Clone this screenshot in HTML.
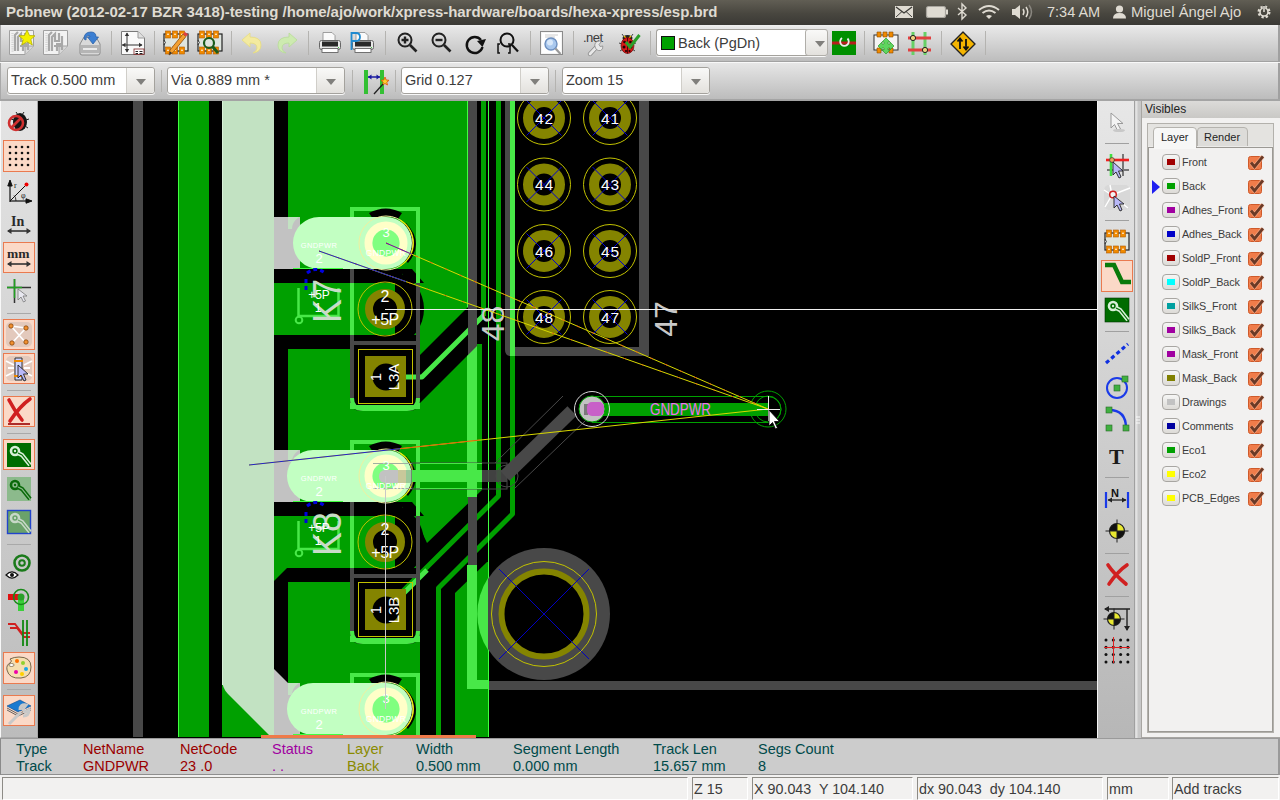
<!DOCTYPE html><html><head><meta charset="utf-8"><style>
*{margin:0;padding:0;box-sizing:border-box}
html,body{width:1280px;height:800px;overflow:hidden;background:#f2f1f0;font-family:"Liberation Sans",sans-serif}
.a{position:absolute}
svg{position:absolute;overflow:visible}
#title{left:0;top:0;width:1280px;height:25px;background:linear-gradient(#615e54,#48463f 55%,#3a3935);color:#dfdbd2;font-size:14.5px;line-height:24px;white-space:nowrap}
#tb1{left:0;top:25px;width:1280px;height:37px;background:linear-gradient(#f0f0f0,#e6e6e6 8%,#bdbdbd);border-left:1px solid #a9a9a9;border-right:2px solid #a0a0a0;border-bottom:1px solid #a2a2a2}
#tb1w{left:0;top:62px;width:1278px;height:1px;background:#f8f8f8}
#tb2{left:0;top:63px;width:1280px;height:36px;background:linear-gradient(#e6e6e6,#bcbcbc);border-left:1px solid #a9a9a9;border-right:2px solid #a0a0a0}
#tb2b{left:0;top:99px;width:1280px;height:2px;background:#a4a4a4}
.sep{position:absolute;width:1px;background:#b4b3b0}
.combo{position:absolute;height:27px;background:#fff;border:1px solid #a4a29d;border-radius:3px;font-size:14.5px;color:#3c3c3c;line-height:25px;padding-left:3px;white-space:nowrap;box-shadow:0 1px 0 #f8f8f8}
.combo .btn{position:absolute;right:0;top:0;bottom:0;width:28px;border-left:1px solid #d0cec9;background:linear-gradient(#f9f9f8,#e3e1dd);border-radius:0 3px 3px 0}
.combo .btn:after{content:"";position:absolute;left:9px;top:11px;border-left:5px solid transparent;border-right:5px solid transparent;border-top:6px solid #807f7c}
#ltb{left:0;top:101px;width:38px;height:637px;background:linear-gradient(#e4e4e4,#bcbcbc);border-left:1px solid #f8f8f8;border-right:1px solid #a8a8a8;border-bottom:1px solid #a8a8a8}
#canvas{left:38px;top:101px;width:1059px;height:637px;background:#000;overflow:hidden}
#rtb{left:1097px;top:101px;width:38px;height:637px;background:linear-gradient(#e7e7e7,#b7b7b7);border-left:1px solid #f4f4f4;border-right:1px solid #a0a0a0}
#sash{left:1135px;top:101px;width:7px;height:637px;background:linear-gradient(90deg,#d6d6d6,#e4e4e4 25%,#c8c8c8 45%,#c8c8c8)}
#panel{left:1141px;top:101px;width:139px;height:637px;background:#f2f1f0;border-left:1px solid #a8a6a2;border-bottom:1px solid #a8a6a2}
#vhead{left:1142px;top:101px;width:138px;height:17px;background:linear-gradient(#dcdbd9,#c9c8c5);color:#1f1f1f;font-size:12px;line-height:17px;padding-left:3px}
#msg{left:0;top:738px;width:1280px;height:37px;background:#cccccc;border-top:1px solid #9a9a9a;border-left:1px solid #8a8a8a;border-right:2px solid #9a9a9a;border-bottom:1px solid #8f8f8f}
#status{left:0;top:775px;width:1280px;height:25px;background:#f2f1f0}
.fld{position:absolute;top:2px;height:23px;border-left:1px solid #8d8b86;border-top:1px solid #8d8b86;border-right:1px solid #fff;border-bottom:1px solid #fff;font-size:14.3px;color:#3c3c3c;line-height:23px;padding-left:1px;white-space:nowrap}
.mh{position:absolute;font-size:14.5px;line-height:17px;white-space:nowrap}
.btnp{position:absolute;background:#fbd9c7;border:1px solid #ea7a4f}
.lsep{position:absolute;height:1px;background:#a9a9a9}
.lname{position:absolute;left:1182px;font-size:10.8px;color:#3c3c3c;line-height:16px;white-space:nowrap;letter-spacing:-0.1px}
.cbtn{position:absolute;left:1162px;width:18px;height:16px;border:1px solid #a8a6a2;border-radius:4px;background:linear-gradient(#f6f6f5,#dddbd7)}
.cbtn i{position:absolute;left:4px;top:4px;width:8px;height:6px}
.chk{position:absolute;left:1248px;width:14px;height:14px;background:#f07746;border:1px solid #c95a2c;border-radius:2px}
</style></head><body>
<div id="title" class="a">
<span style="position:absolute;left:6px;top:0;font-weight:bold;font-size:15px;letter-spacing:-0.05px">Pcbnew (2012-02-17 BZR 3418)-testing /home/ajo/work/xpress-hardware/boards/hexa-xpress/esp.brd</span>
<span style="position:absolute;left:1047px;top:0;font-size:14.5px">7:34 AM</span>
<span style="position:absolute;left:1131px;top:0;font-size:14.8px">Miguel Ángel Ajo</span>
<svg style="left:0;top:0" width="1280" height="24">
<rect x="895.5" y="6.5" width="17" height="11" fill="#dfdbd2" stroke="#dfdbd2"/>
<path d="M896 7 L904 13 L912 7" fill="none" stroke="#3c3b37" stroke-width="1.3"/>
<path d="M896 17 L902 11.5 M912 17 L906 11.5" stroke="#3c3b37" stroke-width="1"/>
<rect x="926.5" y="6.5" width="19" height="11" rx="2" fill="#dfdbd2" stroke="#a8a59e" stroke-width="1.2"/>
<rect x="946" y="9.5" width="2" height="5" fill="#dfdbd2"/>
<path d="M958 8 L966 15 L962 19 L962 4 L966 8 L958 15" fill="none" stroke="#dfdbd2" stroke-width="1.4"/>
<path d="M979 10 Q989 2 999 10" fill="none" stroke="#dfdbd2" stroke-width="2"/>
<path d="M982.5 13 Q989 8 995.5 13" fill="none" stroke="#dfdbd2" stroke-width="2"/>
<path d="M986 16 Q989 14 992 16 L989 19 Z" fill="#dfdbd2"/>
<path d="M1012 9 L1015 9 L1020 5 L1020 19 L1015 15 L1012 15 Z" fill="#dfdbd2"/>
<path d="M1023 9 Q1025 12 1023 15 M1026 7 Q1029.5 12 1026 17" fill="none" stroke="#dfdbd2" stroke-width="1.5"/>
<path d="M1029 5 Q1034 12 1029 19" fill="none" stroke="#8a8780" stroke-width="1.5"/>
<circle cx="1119.5" cy="9" r="3.6" fill="#dfdbd2"/>
<path d="M1113 18.5 Q1113 13 1119.5 13 Q1126 13 1126 18.5 Z" fill="#dfdbd2"/>
<g transform="translate(1264,12)" fill="none" stroke="#dfdbd2">
<circle r="5.2" stroke-width="2.6" stroke-dasharray="2.2 1.9"/>
<circle r="4" stroke-width="1.6"/>
<path d="M0 -7 L0 0" stroke-width="2.4" stroke="#3c3b37"/>
<path d="M0 -6 L0 0" stroke-width="1.6"/>
</g>
</svg>
</div>
<div id="tb1" class="a"></div><div id="tb1w" class="a"></div>
<div class="sep" style="left:111px;top:31px;height:24px"></div>
<div class="sep" style="left:154px;top:31px;height:24px"></div>
<div class="sep" style="left:231px;top:31px;height:24px"></div>
<div class="sep" style="left:308px;top:31px;height:24px"></div>
<div class="sep" style="left:385px;top:31px;height:24px"></div>
<div class="sep" style="left:530px;top:31px;height:24px"></div>
<div class="sep" style="left:573px;top:31px;height:24px"></div>
<div class="sep" style="left:650px;top:31px;height:24px"></div>
<div class="sep" style="left:864px;top:31px;height:24px"></div>
<div class="sep" style="left:941px;top:31px;height:24px"></div>
<div class="sep" style="left:985px;top:31px;height:24px"></div>
<div class="combo" style="left:656px;top:29px;width:171px;border-right:none"><i style="position:absolute;left:4px;top:6px;width:14px;height:14px;background:#00a000;border:1px solid #111"></i><span style="position:absolute;left:21px;top:1px">Back (PgDn)</span><div class="btn" style="right:-1px;width:23px;border:1px solid #b0aea9;border-radius:3px;top:-1px;bottom:-1px"></div></div>
<svg style="left:0;top:0" width="1280" height="62"><g transform="translate(9,30)"><path d="M0.5 0.5 H24.5 V16 L16 24.5 H0.5 Z" fill="#f2f2f2" stroke="#a0a0a0"/><path d="M16 24.5 L16 17 Q16 16 17 16 L24.5 16" fill="#d8d8d8" stroke="#a0a0a0"/><path d="M3 3 V22 M4 3 V22" stroke="#c8c8c8" stroke-dasharray="1 1.2"/><path d="M6 21 V5 L9 2 M9 21 V7 L12 4 V11 H16 V3 M13 14 H20 M11 16 H19 M14 21 V17 M19 20 V6" fill="none" stroke="#a8a8a8" stroke-width="2.2"/><path d="M18 0 L20.5 5.5 L26 5.8 L21.8 9.5 L23.3 15 L18 11.8 L12.7 15 L14.2 9.5 L10 5.8 L15.5 5.5 Z" fill="#f4f000" stroke="#b4b000" stroke-width="0.8"/></g><g transform="translate(43,30)"><path d="M0.5 0.5 H24.5 V16 L16 24.5 H0.5 Z" fill="#f2f2f2" stroke="#a0a0a0"/><path d="M16 24.5 L16 17 Q16 16 17 16 L24.5 16" fill="#d8d8d8" stroke="#a0a0a0"/><path d="M3 3 V22 M4 3 V22" stroke="#c8c8c8" stroke-dasharray="1 1.2"/><path d="M6 21 V5 L9 2 M9 21 V7 L12 4 V11 H16 V3 M13 14 H20 M11 16 H19 M14 21 V17 M19 20 V6" fill="none" stroke="#a8a8a8" stroke-width="2.2"/></g><g transform="translate(78,31)">
<path d="M2 13 L6 6 H18 L22 13 V22 Q22 24 20 24 H4 Q2 24 2 22 Z" fill="#d9d9d9" stroke="#8a8a8a"/>
<path d="M3 14 H21 V22 H3 Z" fill="#b5b5b5"/>
<path d="M5 18 H19" stroke="#eaeaea" stroke-width="2"/>
<path d="M6 8 Q6 1 13 1 Q18 1 18 6 L20.5 6 L15 13 L9.5 6 L12 6 Q12 4 10 4.5 Q7.5 5 8 9 Z" fill="#3b7fd3" stroke="#2c62a8" stroke-width="0.8"/>
</g><g transform="translate(121,31)">
<path d="M0.5 0.5 H17 L23.5 7 V23.5 H0.5 Z" fill="#fafafa" stroke="#7a7a7a"/>
<path d="M17 0.5 V7 H23.5" fill="#e0e0e0" stroke="#9a9a9a"/>
<path d="M6 2 V21 M1 14 H21" stroke="#333" stroke-width="1"/>
<path d="M6 1.5 L3.8 5 H8.2 Z M6 21.5 L3.8 18 H8.2 Z M1 14 L4.5 11.8 V16.2 Z M21.5 14 L18 11.8 V16.2 Z" fill="#333"/>
<rect x="13" y="18" width="10" height="5.5" fill="#fff" stroke="#7a2020" stroke-width="0.8"/>
<path d="M14.5 20.5 H17 M18.5 20.5 H21.5 M14.5 22.5 H17 M18.5 22.5 H21.5" stroke="#222" stroke-width="1.2"/>
</g><g transform="translate(163,30)"><rect x="1" y="4" width="24" height="17" fill="#dfe5df" stroke="#222" stroke-width="1.2"/><path d="M1 10 Q3.5 12.5 1 15" fill="#fff" stroke="#222"/><rect x="2.5" y="1" width="5" height="7" fill="#f08a00" stroke="#b35a00" stroke-width="0.6"/><rect x="4.3" y="3.6" width="1.4" height="1.4" fill="#fff"/><rect x="2.5" y="17" width="5" height="7" fill="#f08a00" stroke="#b35a00" stroke-width="0.6"/><rect x="4.3" y="19.6" width="1.4" height="1.4" fill="#fff"/><rect x="9.5" y="1" width="5" height="7" fill="#f08a00" stroke="#b35a00" stroke-width="0.6"/><rect x="11.3" y="3.6" width="1.4" height="1.4" fill="#fff"/><rect x="9.5" y="17" width="5" height="7" fill="#f08a00" stroke="#b35a00" stroke-width="0.6"/><rect x="11.3" y="19.6" width="1.4" height="1.4" fill="#fff"/><rect x="16.5" y="1" width="5" height="7" fill="#f08a00" stroke="#b35a00" stroke-width="0.6"/><rect x="18.3" y="3.6" width="1.4" height="1.4" fill="#fff"/><rect x="16.5" y="17" width="5" height="7" fill="#f08a00" stroke="#b35a00" stroke-width="0.6"/><rect x="18.3" y="19.6" width="1.4" height="1.4" fill="#fff"/><path d="M6 25 L7 20 L20 4 L23 6.5 L10 22.5 Z" fill="#f4a030" stroke="#8a5010" stroke-width="0.8"/><path d="M20 4 L22 2 L25 4.5 L23 6.5 Z" fill="#e04040"/><path d="M6 25 L7 21.5 L9 23 Z" fill="#333"/></g><g transform="translate(197,30)"><rect x="1" y="4" width="24" height="17" fill="#dfe5df" stroke="#222" stroke-width="1.2"/><path d="M1 10 Q3.5 12.5 1 15" fill="#fff" stroke="#222"/><rect x="2.5" y="1" width="5" height="7" fill="#f08a00" stroke="#b35a00" stroke-width="0.6"/><rect x="4.3" y="3.6" width="1.4" height="1.4" fill="#fff"/><rect x="2.5" y="17" width="5" height="7" fill="#f08a00" stroke="#b35a00" stroke-width="0.6"/><rect x="4.3" y="19.6" width="1.4" height="1.4" fill="#fff"/><rect x="9.5" y="1" width="5" height="7" fill="#f08a00" stroke="#b35a00" stroke-width="0.6"/><rect x="11.3" y="3.6" width="1.4" height="1.4" fill="#fff"/><rect x="9.5" y="17" width="5" height="7" fill="#f08a00" stroke="#b35a00" stroke-width="0.6"/><rect x="11.3" y="19.6" width="1.4" height="1.4" fill="#fff"/><rect x="16.5" y="1" width="5" height="7" fill="#f08a00" stroke="#b35a00" stroke-width="0.6"/><rect x="18.3" y="3.6" width="1.4" height="1.4" fill="#fff"/><rect x="16.5" y="17" width="5" height="7" fill="#f08a00" stroke="#b35a00" stroke-width="0.6"/><rect x="18.3" y="19.6" width="1.4" height="1.4" fill="#fff"/><circle cx="12" cy="13" r="5" fill="none" stroke="#1c5c1c" stroke-width="2.2"/><path d="M15.5 16.5 L21 23" stroke="#1c5c1c" stroke-width="3"/></g><g transform="translate(242,33)">
<path d="M8 0 L0 7 L8 14 V10 Q15 10 15 15 Q15 18 11 20 Q19 19 19 12 Q19 4 8 4 Z" fill="#f3eaa0" stroke="#e6dc80" stroke-width="0.8"/>
</g><g transform="translate(278,33)">
<path d="M11 0 L19 7 L11 14 V10 Q4 10 4 15 Q4 18 8 20 Q0 19 0 12 Q0 4 11 4 Z" fill="#cdeab0" stroke="#b8dc98" stroke-width="0.8"/>
</g><g transform="translate(319,32)"><path d="M4 0.5 H13 L16 3.5 V9 H4 Z" fill="#fafafa" stroke="#8a8a8a" stroke-width="0.8"/><rect x="0.5" y="8.5" width="21" height="9" rx="2" fill="#e8e8e8" stroke="#666"/><rect x="3" y="9.5" width="16" height="5" fill="#2a2a2a"/><rect x="3" y="16.5" width="16" height="4" fill="#fff" stroke="#555" stroke-width="0.8"/><rect x="19" y="15" width="1" height="1" fill="#4c4"/></g><g transform="translate(352,32)"><path d="M4 0.5 H13 L16 3.5 V9 H4 Z" fill="#fafafa" stroke="#8a8a8a" stroke-width="0.8"/><rect x="0.5" y="8.5" width="21" height="9" rx="2" fill="#e8e8e8" stroke="#666"/><rect x="3" y="9.5" width="16" height="5" fill="#2a2a2a"/><rect x="3" y="16.5" width="16" height="4" fill="#fff" stroke="#555" stroke-width="0.8"/><rect x="19" y="15" width="1" height="1" fill="#4c4"/></g><path d="M351.5 50 V33 H356 Q360 33 360 37 Q360 41 356 41 H352" fill="none" stroke="#1e8ad0" stroke-width="1.8"/><g transform="translate(397,32)" fill="none" stroke="#222"><circle cx="8" cy="8" r="6.5" stroke-width="2"/><path d="M13 13 L19.5 19.5" stroke-width="2.6"/><path d="M4.5 8 H11.5 M8 4.5 V11.5" stroke-width="2.4"/></g><g transform="translate(431,32)" fill="none" stroke="#222"><circle cx="8" cy="8" r="6.5" stroke-width="2"/><path d="M13 13 L19.5 19.5" stroke-width="2.6"/><path d="M4.5 8 H11.5" stroke-width="2.4"/></g><g transform="translate(466,35)" fill="none" stroke="#111">
<path d="M15 5 A8 8 0 1 0 16.5 12" stroke-width="2.4"/>
</g><path d="M477 41 L486 39 L482.5 47 Z" fill="#111"/><g transform="translate(497,32)" fill="none" stroke="#111">
<circle cx="10" cy="8" r="6.5" stroke-width="2"/><path d="M15 13 L21 19.5" stroke-width="2.2"/>
<path d="M3 12 H1 V21 H3 M11 12 H13 V21 H11" stroke-width="1.5"/>
</g><g transform="translate(540,31)">
<rect x="0.5" y="0.5" width="22" height="23" fill="#f4f4f4" stroke="#8a8a8a"/>
<rect x="2" y="2" width="19" height="20" fill="#fff"/>
<path d="M5 4 H18 M5 6 H15" stroke="#ccc"/>
<circle cx="11" cy="13" r="6" fill="#a9c8ee" stroke="#6d8fbf" stroke-width="1.4"/>
<circle cx="10" cy="11.5" r="3" fill="#d8e8fa"/>
<path d="M15.5 17.5 L20.5 23" stroke="#999" stroke-width="2.2"/>
</g><g transform="translate(583,31)">
<text x="0" y="11" font-size="13" fill="#3a3a3a" font-family="Liberation Sans" letter-spacing="-0.5">.net</text>
<path d="M7 23 L14 15.5" stroke="#8a8a8a" stroke-width="4.4" stroke-linecap="round"/>
<path d="M7 23 L14 15.5" stroke="#e8e8e8" stroke-width="2.8" stroke-linecap="round"/>
<path d="M12.5 17 Q10.5 12.5 14 10.5 Q16.5 9.5 18.5 10.5 L16 13.5 L17.2 15.5 L19.8 15 Q20.5 18.5 17.5 19.5 Q15 20 13.5 18.5 Z" fill="#e8e8e8" stroke="#8a8a8a" stroke-width="0.8"/>
</g><g transform="translate(617,31)">
<path d="M5 3 L8 7 M16 3 L13 7 M2 12 L5 13 M19 12 L16 13 M3 20 L6 18 M18 20 L15 18" stroke="#333" stroke-width="0.9"/>
<ellipse cx="10.5" cy="7" rx="5" ry="3" fill="#222"/>
<path d="M7 5 L9 7 M14 5 L12 7" stroke="#f0c000" stroke-width="1.2"/>
<ellipse cx="10.5" cy="14.5" rx="6.5" ry="8" fill="#d81818" stroke="#500" stroke-width="0.6"/>
<path d="M10.5 7 V22.5" stroke="#300" stroke-width="0.8"/>
<circle cx="7.5" cy="11" r="1.3" fill="#200"/><circle cx="13.5" cy="11" r="1.3" fill="#200"/><circle cx="7" cy="16" r="1.5" fill="#200"/><circle cx="14" cy="16" r="1.5" fill="#200"/><circle cx="9" cy="20" r="1.1" fill="#200"/><circle cx="12.5" cy="20" r="1.1" fill="#200"/>
<path d="M9 11 L13 16 L22.5 4" fill="none" stroke="#2aa02a" stroke-width="3"/>
</g><g transform="translate(832,31)">
<rect x="0" y="0" width="24" height="24" fill="#009000"/>
<path d="M0 12 H24" stroke="#b81d1d" stroke-width="3"/>
<path d="M15.5 7.5 A4.3 4.3 0 1 1 10 7" fill="none" stroke="#eee" stroke-width="1.8"/>
</g><g transform="translate(873,31)">
<rect x="1" y="4" width="24" height="15" fill="#f4f4f4" stroke="#333" stroke-width="1"/>
<path d="M4 1 H8 V6 H4 Z M10 1 H14 V6 H10 Z M16 1 H20 V6 H16 Z M4 17 H8 V22 H4 Z M16 17 H20 V22 H16 Z" fill="#f08a00" stroke="#8a4a00" stroke-width="0.6"/>
<path d="M13 7 L17 11 H15 V13 H17 V11 L21 15 L17 19 V17 H15 V19 H17 L13 23 L9 19 H11 V17 H9 V19 L5 15 L9 11 V13 H11 V11 H9 Z" fill="#5fd45f" stroke="#2f9a2f" stroke-width="0.7"/>
</g><g transform="translate(907,31)">
<path d="M6 1 V24 M18 1 V24" stroke="#66d066" stroke-width="3"/>
<path d="M1 7 H24 M1 19 H24" stroke="#e04040" stroke-width="3"/>
<circle cx="6" cy="7" r="2.6" fill="#f0d080" stroke="#222"/>
<circle cx="18" cy="19" r="2.6" fill="#f0d080" stroke="#222"/>
</g><g transform="translate(950,31)">
<path d="M13 1 L25 13 L13 25 L1 13 Z" fill="#f4b400" stroke="#222" stroke-width="1.4" stroke-linejoin="round"/>
<path d="M10 18 V8 M7.5 10.5 L10 7.5 L12.5 10.5 M16 8 V18 M13.5 15.5 L16 18.5 L18.5 15.5" fill="none" stroke="#111" stroke-width="1.8"/>
</g></svg>
<div id="tb2" class="a"></div><div id="tb2b" class="a"></div>
<div class="combo" style="left:7px;top:67px;width:148px">Track 0.500 mm<div class="btn"></div></div>
<div class="sep" style="left:161px;top:70px;height:22px"></div>
<div class="combo" style="left:167px;top:67px;width:178px">Via 0.889 mm *<div class="btn"></div></div>
<div class="sep" style="left:352px;top:70px;height:22px"></div>
<div class="sep" style="left:395px;top:70px;height:22px"></div>
<div class="combo" style="left:401px;top:67px;width:148px">Grid 0.127<div class="btn"></div></div>
<div class="sep" style="left:555px;top:70px;height:22px"></div>
<div class="combo" style="left:562px;top:67px;width:148px">Zoom 15<div class="btn"></div></div>
<svg style="left:362px;top:68px" width="28" height="28">
<path d="M4 2 V26 M20 2 V26" stroke="#33c033" stroke-width="4"/>
<path d="M6 9 H18" stroke="#1a1aa0" stroke-width="1.5"/>
<path d="M6 9 L9.5 6.5 V11.5 Z M18 9 L14.5 6.5 V11.5 Z" fill="#1a1aa0"/>
<path d="M23 9 L24.2 12 L27 12.3 L24.8 14.2 L25.5 17 L23 15.5 L20.5 17 L21.2 14.2 L19 12.3 L21.8 12 Z" fill="#f8d030" stroke="#e05000" stroke-width="0.8"/>
<path d="M12 26 L21 16" stroke="#222" stroke-width="1.3"/>
</svg>
<div id="ltb" class="a"></div>
<svg style="left:0;top:0" width="40" height="740"><rect x="3.5" y="140.5" width="31" height="31" fill="#fbd9c7" stroke="#ea7a4f"/><rect x="3.5" y="242.5" width="31" height="30" fill="#fbd9c7" stroke="#ea7a4f"/><rect x="3.5" y="319.5" width="31" height="30" fill="#fbd9c7" stroke="#ea7a4f"/><rect x="3.5" y="353.5" width="31" height="30" fill="#fbd9c7" stroke="#ea7a4f"/><rect x="3.5" y="396.5" width="31" height="30" fill="#fbd9c7" stroke="#ea7a4f"/><rect x="3.5" y="439.5" width="31" height="30" fill="#fbd9c7" stroke="#ea7a4f"/><rect x="3.5" y="652.5" width="31" height="31" fill="#fbd9c7" stroke="#ea7a4f"/><rect x="3.5" y="695.5" width="31" height="30" fill="#fbd9c7" stroke="#ea7a4f"/><rect x="7" y="313" width="24" height="1" fill="#a9a9a9"/><rect x="7" y="390" width="24" height="1" fill="#a9a9a9"/><rect x="7" y="433" width="24" height="1" fill="#a9a9a9"/><rect x="7" y="544" width="24" height="1" fill="#a9a9a9"/><rect x="7" y="689" width="24" height="1" fill="#a9a9a9"/><g transform="translate(7,109)">
<ellipse cx="13" cy="13" rx="7" ry="9" fill="#151515"/>
<path d="M9 3 L11 6 M17 3 L15 6 M4 10 L7 11 M22 10 L19 11 M5 19 L8 17 M21 19 L18 17" stroke="#222" stroke-width="1"/>
<circle cx="9" cy="14" r="7" fill="none" stroke="#d03030" stroke-width="2.6"/>
<path d="M4.5 18.5 L13.5 9.5" stroke="#d03030" stroke-width="2.6"/>
</g><g fill="#111"><circle cx="10" cy="147" r="1.3"/><circle cx="10" cy="153" r="1.3"/><circle cx="10" cy="159" r="1.3"/><circle cx="10" cy="165" r="1.3"/><circle cx="16" cy="147" r="1.3"/><circle cx="16" cy="153" r="1.3"/><circle cx="16" cy="159" r="1.3"/><circle cx="16" cy="165" r="1.3"/><circle cx="22" cy="147" r="1.3"/><circle cx="22" cy="153" r="1.3"/><circle cx="22" cy="159" r="1.3"/><circle cx="22" cy="165" r="1.3"/><circle cx="28" cy="147" r="1.3"/><circle cx="28" cy="153" r="1.3"/><circle cx="28" cy="159" r="1.3"/><circle cx="28" cy="165" r="1.3"/></g><g transform="translate(7,179)" fill="none" stroke="#111">
<path d="M3 23 V3" stroke-width="1.2"/><path d="M0.8 7 L3 1 L5.2 7 Z" fill="#111"/>
<path d="M3 22 H23" stroke-width="1.2"/><path d="M19 19.8 L25 22 L19 24.2 Z" fill="#111"/>
<path d="M3 22 L19 6" stroke-width="1"/><circle cx="19.5" cy="5.5" r="2" fill="#e00" stroke="none"/>
<text x="7" y="9" font-size="8" fill="#111" stroke="none" font-family="Liberation Serif">r</text>
<text x="14" y="19" font-size="8" fill="#111" stroke="none" font-family="Liberation Serif">φ</text>
<path d="M9 22 Q9 18 7 16.5" stroke-width="0.8"/>
</g><text x="11" y="226" font-size="14" font-weight="bold" fill="#2a2a2a" font-family="Liberation Serif">In</text>
<path d="M8 231 H30" stroke="#333" stroke-width="1.6"/><path d="M7 231 L11.5 228 V234 Z M31 231 L26.5 228 V234 Z" fill="#333"/><text x="7" y="258" font-size="13.5" font-weight="bold" fill="#2a2a2a" font-family="Liberation Serif">mm</text>
<path d="M8 264 H30" stroke="#333" stroke-width="1.6"/><path d="M7 264 L11.5 261 V267 Z M31 264 L26.5 261 V267 Z" fill="#333"/><path d="M7 287.5 H31 M14.5 279 V303" stroke="#333" stroke-width="1.5"/>
<path d="M7 287.5 H22 M14.5 279 V298" stroke="#22a022" stroke-width="1.5"/>
<path d="M18 289 L18 300 L21 297 L23.5 302 L25.5 301 L23 296 L27 296 Z" fill="#e8e8f0" stroke="#777" stroke-width="0.8"/><rect x="6" y="322" width="26" height="25" rx="5" fill="#e3c9bc"/>
<path d="M11 326 L26 343 M26 328 L12 343 M11 326 L26 328" stroke="#fff" stroke-width="1.6"/>
<circle cx="11" cy="326" r="2.2" fill="#f09030" stroke="#7a3a00" stroke-width="0.7"/><circle cx="26" cy="328" r="2.2" fill="#f09030" stroke="#7a3a00" stroke-width="0.7"/>
<circle cx="12" cy="343" r="2.2" fill="#f09030" stroke="#7a3a00" stroke-width="0.7"/><circle cx="26" cy="342" r="2.2" fill="#f09030" stroke="#7a3a00" stroke-width="0.7"/><rect x="6" y="356" width="26" height="25" rx="5" fill="#e3c9bc"/>
<path d="M6 361 L14 365 M6 376 L14 372 M32 361 L24 365 M32 376 L24 372 M8 368 H14 M24 368 H30" stroke="#fff" stroke-width="1.8"/>
<path d="M15 358 H22 V380 H15 Z" fill="#cfd5ff" stroke="#333" stroke-width="1"/>
<path d="M14 361 H23 M14 376 H23" stroke="#f08a00" stroke-width="2"/>
<path d="M18 365 L18 378 L21 375 L24 381 L26 380 L23.5 374 L28 374 Z" fill="#b8b8f8" stroke="#222" stroke-width="0.9"/><path d="M9 400 Q14 410 22 420 M30 399 Q20 406 10 421" fill="none" stroke="#d02020" stroke-width="3.6" stroke-linecap="round"/>
<path d="M8 424 H30" stroke="#900" stroke-width="1.6"/><g transform="translate(7,443)"><rect x="0" y="0" width="24" height="24" fill="#006c00"/><circle cx="8" cy="8" r="4" fill="none" stroke="#d8f0d8" stroke-width="2.6"/><path d="M11 10 L15 12 L23 22" fill="none" stroke="#d8f0d8" stroke-width="4.2"/><path d="M11 10 L15 12 L23 22" fill="none" stroke="#006c00" stroke-width="1.2"/><circle cx="8" cy="8" r="1.2" fill="#d8f0d8"/></g><g transform="translate(7,477)"><rect x="0" y="0" width="24" height="24" fill="#8cba8c"/><circle cx="8" cy="8" r="4" fill="none" stroke="#0a6a0a" stroke-width="2.6"/><path d="M11 10 L15 12 L23 22" fill="none" stroke="#0a6a0a" stroke-width="4.2"/><path d="M11 10 L15 12 L23 22" fill="none" stroke="#8cba8c" stroke-width="1.2"/><circle cx="8" cy="8" r="1.2" fill="#0a6a0a"/></g><g transform="translate(7,510)"><rect x="0" y="0" width="24" height="24" fill="#6aa26a"/><rect x="0.5" y="0.5" width="23" height="23" fill="none" stroke="#2244cc" stroke-width="1.4"/><circle cx="8" cy="8" r="4" fill="none" stroke="#c8d8c8" stroke-width="2.6"/><path d="M11 10 L15 12 L23 22" fill="none" stroke="#c8d8c8" stroke-width="4.2"/><path d="M11 10 L15 12 L23 22" fill="none" stroke="#6aa26a" stroke-width="1.2"/><circle cx="8" cy="8" r="1.2" fill="#c8d8c8"/></g><circle cx="22" cy="563" r="7.5" fill="none" stroke="#1a7a1a" stroke-width="2.6"/><circle cx="22" cy="563" r="2.8" fill="none" stroke="#1a7a1a" stroke-width="2"/>
<path d="M6 575 Q12 569 18 575 Q12 581 6 575 Z" fill="#fff" stroke="#111" stroke-width="1.2"/><circle cx="12" cy="575" r="2" fill="#111"/><rect x="8" y="594" width="12" height="6" fill="#e01010"/>
<rect x="18" y="598" width="6" height="13" fill="#3ad03a"/>
<circle cx="21" cy="597" r="7.5" fill="none" stroke="#1a8a1a" stroke-width="1.6"/>
<circle cx="21" cy="597" r="3.5" fill="#2aa02a"/><path d="M8 624 H15 L22 633 H30 M10 628 H17 L24 637 H30" fill="none" stroke="#d02020" stroke-width="1.8"/>
<path d="M23 620 V646 M27 620 V646" stroke="#118811" stroke-width="1.8"/><path d="M19 657 Q31 657 31 667 Q31 677 21 678 Q9 679 7 670 Q6 665 10 663 Q13 661 10 659 Q14 657 19 657 Z" fill="#f5deb0" stroke="#6a5a40" stroke-width="0.9"/>
<ellipse cx="11.5" cy="665" rx="2.6" ry="1.5" fill="#fff" stroke="#6a5a40" stroke-width="0.7"/>
<circle cx="17" cy="661" r="2" fill="#ff7000"/><circle cx="23" cy="663" r="2" fill="#90d030"/><circle cx="26" cy="669" r="2" fill="#1aa8e8"/><circle cx="16" cy="672" r="2" fill="#ee00aa"/><circle cx="22" cy="674" r="2" fill="#ffd000"/><path d="M7 706 L20 700 L31 706 L18 712 Z" fill="#1a7ad0" stroke="#0a4a90" stroke-width="0.6"/>
<path d="M7 708 L18 714 L31 708 M7 710 L18 716 L31 710" fill="none" stroke="#555" stroke-width="0.9"/>
<path d="M9 724 L21 712 M20 710 Q20 704 26 705 L23 709 L25 712 L29 710 Q29 716 23 716" fill="none" stroke="#c8c8c8" stroke-width="3"/></svg>
<div id="rtb" class="a"></div><div id="sash" class="a"></div>
<svg style="left:0;top:0" width="1280" height="740"><rect x="1105" y="143" width="24" height="1" fill="#a0a0a0"/><rect x="1105" y="220" width="24" height="1" fill="#a0a0a0"/><rect x="1105" y="331" width="24" height="1" fill="#a0a0a0"/><rect x="1105" y="477" width="24" height="1" fill="#a0a0a0"/><rect x="1105" y="553" width="24" height="1" fill="#a0a0a0"/><rect x="1105" y="596" width="24" height="1" fill="#a0a0a0"/><rect x="1101.5" y="260.5" width="31" height="31" fill="#fbd9c7" stroke="#ea7a4f"/><path d="M1111 113 L1111 128 L1114.5 124.5 L1117.5 130.5 L1120.5 129 L1117.5 123.5 L1123 123.5 Z" fill="#f4f4f4" stroke="#9a9a9a" stroke-width="1"/>
<ellipse cx="1119" cy="130.5" rx="6" ry="1.6" fill="#c8c8c8"/><path d="M1107 170 H1129" stroke="#777" stroke-width="2"/>
<path d="M1123 154 V176" stroke="#777" stroke-width="2"/>
<path d="M1106 160 H1129" stroke="#ee2020" stroke-width="2.6"/>
<path d="M1111 154 V176" stroke="#40e040" stroke-width="2.6"/>
<circle cx="1112" cy="160" r="2.4" fill="#f0a060" stroke="#333" stroke-width="0.7"/>
<path d="M1113 162 L1113 175 L1116 172 L1119 178 L1121 177 L1118.5 171 L1123 171 Z" fill="#b8b8f8" stroke="#222" stroke-width="0.9"/><rect x="1104" y="185" width="26" height="25" rx="5" fill="#d8d8d8"/>
<path d="M1112 195 L1104 190 M1112 195 L1110 185 M1112 195 L1105 207 M1112 195 L1130 188 M1112 195 L1128 208" stroke="#fff" stroke-width="1.4"/>
<circle cx="1113" cy="194.5" r="3.3" fill="#f4f4f4" stroke="#d02020" stroke-width="1.5"/>
<path d="M1114 196 L1114 208 L1117 205 L1120 211 L1122 210 L1119.5 204 L1124 204 Z" fill="#b8b8f8" stroke="#222" stroke-width="0.9"/><g transform="translate(1104,229)"><rect x="1" y="4" width="24" height="17" fill="#dfe5df" stroke="#222" stroke-width="1.2"/><path d="M1 10 Q3.5 12.5 1 15" fill="#fff" stroke="#222"/><rect x="2.5" y="1" width="5" height="7" fill="#f08a00" stroke="#b35a00" stroke-width="0.6"/><rect x="4.3" y="3.6" width="1.4" height="1.4" fill="#fff"/><rect x="2.5" y="17" width="5" height="7" fill="#f08a00" stroke="#b35a00" stroke-width="0.6"/><rect x="4.3" y="19.6" width="1.4" height="1.4" fill="#fff"/><rect x="9.5" y="1" width="5" height="7" fill="#f08a00" stroke="#b35a00" stroke-width="0.6"/><rect x="11.3" y="3.6" width="1.4" height="1.4" fill="#fff"/><rect x="9.5" y="17" width="5" height="7" fill="#f08a00" stroke="#b35a00" stroke-width="0.6"/><rect x="11.3" y="19.6" width="1.4" height="1.4" fill="#fff"/><rect x="16.5" y="1" width="5" height="7" fill="#f08a00" stroke="#b35a00" stroke-width="0.6"/><rect x="18.3" y="3.6" width="1.4" height="1.4" fill="#fff"/><rect x="16.5" y="17" width="5" height="7" fill="#f08a00" stroke="#b35a00" stroke-width="0.6"/><rect x="18.3" y="19.6" width="1.4" height="1.4" fill="#fff"/></g><path d="M1105 265 H1114 L1122 282 H1131" fill="none" stroke="#0a7a0a" stroke-width="4.5"/><g transform="translate(1105,298)"><rect x="0" y="0" width="24" height="24" fill="#006c00" stroke="#003300" stroke-width="0.6"/><circle cx="8" cy="8" r="4" fill="none" stroke="#d8f0d8" stroke-width="2.6"/><path d="M11 10 L15 12 L23 22" fill="none" stroke="#d8f0d8" stroke-width="4.2"/><path d="M11 10 L15 12 L23 22" fill="none" stroke="#006c00" stroke-width="1.2"/><circle cx="8" cy="8" r="1.2" fill="#d8f0d8"/></g><path d="M1106 363 L1128 344" stroke="#1030e0" stroke-width="3.2" stroke-dasharray="4 3"/><circle cx="1117" cy="388" r="10" fill="none" stroke="#1a3ae8" stroke-width="2"/>
<rect x="1114" y="385" width="6" height="6" fill="#40b040" stroke="#2a6a2a" stroke-width="0.6"/>
<rect x="1122" y="376" width="6" height="6" fill="#40b040" stroke="#2a6a2a" stroke-width="0.6"/><path d="M1109 410 Q1126 410 1126 428" fill="none" stroke="#1a3ae8" stroke-width="2.4"/>
<rect x="1106" y="407" width="6" height="6" fill="#40b040" stroke="#2a6a2a" stroke-width="0.6"/>
<rect x="1106" y="425" width="6" height="6" fill="#40b040" stroke="#2a6a2a" stroke-width="0.6"/>
<rect x="1123" y="425" width="6" height="6" fill="#40b040" stroke="#2a6a2a" stroke-width="0.6"/><text x="1109" y="464" font-size="22" font-weight="bold" fill="#1a1a1a" font-family="Liberation Serif">T</text><path d="M1106 492 V508 M1128 492 V508" stroke="#1a3ae8" stroke-width="2.2"/>
<path d="M1108 500 H1126" stroke="#222" stroke-width="1.3"/><path d="M1107.5 500 L1112 497.5 V502.5 Z M1126.5 500 L1122 497.5 V502.5 Z" fill="#222"/>
<text x="1111" y="497" font-size="11" font-weight="bold" fill="#111" font-family="Liberation Sans">N</text><circle cx="1117" cy="531" r="7.5" fill="#e8e830" stroke="#222" stroke-width="1.2"/><path d="M1117 531 V523.5 A7.5 7.5 0 0 0 1109.5 531 Z M1117 531 V538.5 A7.5 7.5 0 0 0 1124.5 531 Z" fill="#111"/><path d="M1105.5 531 H1128.5 M1117 519.5 V542.5" stroke="#222" stroke-width="1"/><path d="M1108 565 Q1114 574 1126 584 M1127 565 Q1118 571 1109 584" fill="none" stroke="#d02020" stroke-width="3.6" stroke-linecap="round"/><circle cx="1114" cy="619" r="6.5" fill="#e8e830" stroke="#222" stroke-width="1.2"/><path d="M1114 619 V612.5 A6.5 6.5 0 0 0 1107.5 619 Z M1114 619 V625.5 A6.5 6.5 0 0 0 1120.5 619 Z" fill="#111"/><path d="M1103.5 619 H1124.5 M1114 608.5 V629.5" stroke="#222" stroke-width="1"/><path d="M1105 609 H1130 M1127 609 V630" stroke="#222" stroke-width="1.4"/>
<path d="M1104 609 L1109 606 V612 Z M1127 631 L1124 626 H1130 Z" fill="#222"/><g fill="#111"><circle cx="1106.0" cy="640.0" r="1.5"/><circle cx="1106.0" cy="647.3" r="1.5"/><circle cx="1106.0" cy="654.6" r="1.5"/><circle cx="1106.0" cy="661.9" r="1.5"/><circle cx="1113.3" cy="640.0" r="1.5"/><circle cx="1113.3" cy="647.3" r="1.5"/><circle cx="1113.3" cy="654.6" r="1.5"/><circle cx="1113.3" cy="661.9" r="1.5"/><circle cx="1120.6" cy="640.0" r="1.5"/><circle cx="1120.6" cy="647.3" r="1.5"/><circle cx="1120.6" cy="654.6" r="1.5"/><circle cx="1120.6" cy="661.9" r="1.5"/><circle cx="1127.9" cy="640.0" r="1.5"/><circle cx="1127.9" cy="647.3" r="1.5"/><circle cx="1127.9" cy="654.6" r="1.5"/><circle cx="1127.9" cy="661.9" r="1.5"/></g><path d="M1104 647.5 H1130 M1113.5 637 V663" stroke="#e02020" stroke-width="1"/><rect x="1094" y="381" width="3" height="73" fill="#ee7a4a"/><path d="M1136 417 H1140 M1136 420 H1140 M1136 423 H1140" stroke="#fafafa" stroke-width="1"/></svg>
<div id="panel" class="a"></div>
<div id="vhead" class="a">Visibles</div>
<svg style="left:0;top:0" width="1280" height="740">
<rect x="1147.5" y="123.5" width="126" height="609" fill="#ecebe9" stroke="#b3b1ac"/>
<rect x="1148" y="124" width="125" height="22" fill="#e4e3e0"/>
<rect x="1148.5" y="147.5" width="124" height="584" fill="#f2f1f0" stroke="#9b9994"/>
<path d="M1153.5 147 V131 Q1153.5 127.5 1157 127.5 H1193 Q1196.5 127.5 1196.5 131 V147" fill="#f7f7f6" stroke="#b5b3ae"/>
<path d="M1197.5 146 V131 Q1197.5 127.5 1201 127.5 H1244 Q1247.5 127.5 1247.5 131 V146" fill="#dddcd9" stroke="#b5b3ae"/>
<rect x="1154" y="145" width="42" height="4" fill="#f7f7f6"/>
</svg>
<div class="a" style="left:1161px;top:129px;font-size:11px;color:#1f1f1f;line-height:16px">Layer</div>
<div class="a" style="left:1204px;top:129px;font-size:11px;color:#1f1f1f;line-height:16px">Render</div>
<div class="cbtn" style="top:154px"><i style="background:#a00000"></i></div>
<div class="lname" style="top:154px">Front</div>
<div class="cbtn" style="top:178px"><i style="background:#00a000"></i></div>
<div class="lname" style="top:178px">Back</div>
<div class="cbtn" style="top:202px"><i style="background:#a000a0"></i></div>
<div class="lname" style="top:202px">Adhes_Front</div>
<div class="cbtn" style="top:226px"><i style="background:#0000c8"></i></div>
<div class="lname" style="top:226px">Adhes_Back</div>
<div class="cbtn" style="top:250px"><i style="background:#a00000"></i></div>
<div class="lname" style="top:250px">SoldP_Front</div>
<div class="cbtn" style="top:274px"><i style="background:#00ffff"></i></div>
<div class="lname" style="top:274px">SoldP_Back</div>
<div class="cbtn" style="top:298px"><i style="background:#00a0a0"></i></div>
<div class="lname" style="top:298px">SilkS_Front</div>
<div class="cbtn" style="top:322px"><i style="background:#a000a0"></i></div>
<div class="lname" style="top:322px">SilkS_Back</div>
<div class="cbtn" style="top:346px"><i style="background:#a000a0"></i></div>
<div class="lname" style="top:346px">Mask_Front</div>
<div class="cbtn" style="top:370px"><i style="background:#808000"></i></div>
<div class="lname" style="top:370px">Mask_Back</div>
<div class="cbtn" style="top:394px"><i style="background:#c2c2c2"></i></div>
<div class="lname" style="top:394px">Drawings</div>
<div class="cbtn" style="top:418px"><i style="background:#0000a0"></i></div>
<div class="lname" style="top:418px">Comments</div>
<div class="cbtn" style="top:442px"><i style="background:#00a000"></i></div>
<div class="lname" style="top:442px">Eco1</div>
<div class="cbtn" style="top:466px"><i style="background:#ffff00"></i></div>
<div class="lname" style="top:466px">Eco2</div>
<div class="cbtn" style="top:490px"><i style="background:#ffff00"></i></div>
<div class="lname" style="top:490px">PCB_Edges</div>
<svg style="left:0;top:0" width="1280" height="740"><rect x="1248.5" y="156.5" width="13" height="13" rx="2" fill="#f07c4a" stroke="#cf5a2a"/><path d="M1251 162.5 L1254.5 166.7 L1263 156.3" fill="none" stroke="#f9b898" stroke-width="4.2" stroke-opacity="0.7"/><path d="M1251 162.5 L1254.5 166.7 L1263 156.3" fill="none" stroke="#6b3a26" stroke-width="2.8"/><rect x="1248.5" y="180.5" width="13" height="13" rx="2" fill="#f07c4a" stroke="#cf5a2a"/><path d="M1251 186.5 L1254.5 190.7 L1263 180.3" fill="none" stroke="#f9b898" stroke-width="4.2" stroke-opacity="0.7"/><path d="M1251 186.5 L1254.5 190.7 L1263 180.3" fill="none" stroke="#6b3a26" stroke-width="2.8"/><rect x="1248.5" y="204.5" width="13" height="13" rx="2" fill="#f07c4a" stroke="#cf5a2a"/><path d="M1251 210.5 L1254.5 214.7 L1263 204.3" fill="none" stroke="#f9b898" stroke-width="4.2" stroke-opacity="0.7"/><path d="M1251 210.5 L1254.5 214.7 L1263 204.3" fill="none" stroke="#6b3a26" stroke-width="2.8"/><rect x="1248.5" y="228.5" width="13" height="13" rx="2" fill="#f07c4a" stroke="#cf5a2a"/><path d="M1251 234.5 L1254.5 238.7 L1263 228.3" fill="none" stroke="#f9b898" stroke-width="4.2" stroke-opacity="0.7"/><path d="M1251 234.5 L1254.5 238.7 L1263 228.3" fill="none" stroke="#6b3a26" stroke-width="2.8"/><rect x="1248.5" y="252.5" width="13" height="13" rx="2" fill="#f07c4a" stroke="#cf5a2a"/><path d="M1251 258.5 L1254.5 262.7 L1263 252.3" fill="none" stroke="#f9b898" stroke-width="4.2" stroke-opacity="0.7"/><path d="M1251 258.5 L1254.5 262.7 L1263 252.3" fill="none" stroke="#6b3a26" stroke-width="2.8"/><rect x="1248.5" y="276.5" width="13" height="13" rx="2" fill="#f07c4a" stroke="#cf5a2a"/><path d="M1251 282.5 L1254.5 286.7 L1263 276.3" fill="none" stroke="#f9b898" stroke-width="4.2" stroke-opacity="0.7"/><path d="M1251 282.5 L1254.5 286.7 L1263 276.3" fill="none" stroke="#6b3a26" stroke-width="2.8"/><rect x="1248.5" y="300.5" width="13" height="13" rx="2" fill="#f07c4a" stroke="#cf5a2a"/><path d="M1251 306.5 L1254.5 310.7 L1263 300.3" fill="none" stroke="#f9b898" stroke-width="4.2" stroke-opacity="0.7"/><path d="M1251 306.5 L1254.5 310.7 L1263 300.3" fill="none" stroke="#6b3a26" stroke-width="2.8"/><rect x="1248.5" y="324.5" width="13" height="13" rx="2" fill="#f07c4a" stroke="#cf5a2a"/><path d="M1251 330.5 L1254.5 334.7 L1263 324.3" fill="none" stroke="#f9b898" stroke-width="4.2" stroke-opacity="0.7"/><path d="M1251 330.5 L1254.5 334.7 L1263 324.3" fill="none" stroke="#6b3a26" stroke-width="2.8"/><rect x="1248.5" y="348.5" width="13" height="13" rx="2" fill="#f07c4a" stroke="#cf5a2a"/><path d="M1251 354.5 L1254.5 358.7 L1263 348.3" fill="none" stroke="#f9b898" stroke-width="4.2" stroke-opacity="0.7"/><path d="M1251 354.5 L1254.5 358.7 L1263 348.3" fill="none" stroke="#6b3a26" stroke-width="2.8"/><rect x="1248.5" y="372.5" width="13" height="13" rx="2" fill="#f07c4a" stroke="#cf5a2a"/><path d="M1251 378.5 L1254.5 382.7 L1263 372.3" fill="none" stroke="#f9b898" stroke-width="4.2" stroke-opacity="0.7"/><path d="M1251 378.5 L1254.5 382.7 L1263 372.3" fill="none" stroke="#6b3a26" stroke-width="2.8"/><rect x="1248.5" y="396.5" width="13" height="13" rx="2" fill="#f07c4a" stroke="#cf5a2a"/><path d="M1251 402.5 L1254.5 406.7 L1263 396.3" fill="none" stroke="#f9b898" stroke-width="4.2" stroke-opacity="0.7"/><path d="M1251 402.5 L1254.5 406.7 L1263 396.3" fill="none" stroke="#6b3a26" stroke-width="2.8"/><rect x="1248.5" y="420.5" width="13" height="13" rx="2" fill="#f07c4a" stroke="#cf5a2a"/><path d="M1251 426.5 L1254.5 430.7 L1263 420.3" fill="none" stroke="#f9b898" stroke-width="4.2" stroke-opacity="0.7"/><path d="M1251 426.5 L1254.5 430.7 L1263 420.3" fill="none" stroke="#6b3a26" stroke-width="2.8"/><rect x="1248.5" y="444.5" width="13" height="13" rx="2" fill="#f07c4a" stroke="#cf5a2a"/><path d="M1251 450.5 L1254.5 454.7 L1263 444.3" fill="none" stroke="#f9b898" stroke-width="4.2" stroke-opacity="0.7"/><path d="M1251 450.5 L1254.5 454.7 L1263 444.3" fill="none" stroke="#6b3a26" stroke-width="2.8"/><rect x="1248.5" y="468.5" width="13" height="13" rx="2" fill="#f07c4a" stroke="#cf5a2a"/><path d="M1251 474.5 L1254.5 478.7 L1263 468.3" fill="none" stroke="#f9b898" stroke-width="4.2" stroke-opacity="0.7"/><path d="M1251 474.5 L1254.5 478.7 L1263 468.3" fill="none" stroke="#6b3a26" stroke-width="2.8"/><rect x="1248.5" y="492.5" width="13" height="13" rx="2" fill="#f07c4a" stroke="#cf5a2a"/><path d="M1251 498.5 L1254.5 502.7 L1263 492.3" fill="none" stroke="#f9b898" stroke-width="4.2" stroke-opacity="0.7"/><path d="M1251 498.5 L1254.5 502.7 L1263 492.3" fill="none" stroke="#6b3a26" stroke-width="2.8"/><path d="M1152 180 L1160 187 L1152 194 Z" fill="#2020f0"/></svg>
<div id="msg" class="a"></div>
<div class="mh" style="left:16px;top:741px;color:#004a4a">Type</div>
<div class="mh" style="left:16px;top:758px;color:#004a4a">Track</div>
<div class="mh" style="left:83px;top:741px;color:#9a0000">NetName</div>
<div class="mh" style="left:83px;top:758px;color:#9a0000">GNDPWR</div>
<div class="mh" style="left:180px;top:741px;color:#9a0000">NetCode</div>
<div class="mh" style="left:180px;top:758px;color:#9a0000">23 .0</div>
<div class="mh" style="left:272px;top:741px;color:#a000a0">Status</div>
<div class="mh" style="left:272px;top:758px;color:#a000a0">. .</div>
<div class="mh" style="left:347px;top:741px;color:#8a8a00">Layer</div>
<div class="mh" style="left:347px;top:758px;color:#8a8a00">Back</div>
<div class="mh" style="left:416px;top:741px;color:#004a4a">Width</div>
<div class="mh" style="left:416px;top:758px;color:#004a4a">0.500 mm</div>
<div class="mh" style="left:513px;top:741px;color:#004a4a">Segment Length</div>
<div class="mh" style="left:513px;top:758px;color:#004a4a">0.000 mm</div>
<div class="mh" style="left:653px;top:741px;color:#004a4a">Track Len</div>
<div class="mh" style="left:653px;top:758px;color:#004a4a">15.657 mm</div>
<div class="mh" style="left:758px;top:741px;color:#004a4a">Segs Count</div>
<div class="mh" style="left:758px;top:758px;color:#004a4a">8</div>
<div id="status" class="a">
<div class="fld" style="left:2px;width:686px"></div>
<div class="fld" style="left:692px;width:56px">Z 15</div>
<div class="fld" style="left:752px;width:161px">X 90.043&nbsp; Y 104.140</div>
<div class="fld" style="left:917px;width:186px">dx 90.043&nbsp; dy 104.140</div>
<div class="fld" style="left:1107px;width:62px">mm</div>
<div class="fld" style="left:1172px;width:107px">Add tracks</div>
</div>
<svg style="left:38px;top:101px" width="1059" height="637" viewBox="38 101 1059 637"><defs><clipPath id="cc"><rect x="38" y="101" width="1059" height="637"/></clipPath></defs><rect x="38" y="101" width="1059" height="637" fill="#000"/><g clip-path="url(#cc)"><rect x="133" y="101" width="10" height="636" fill="#484848"/><rect x="178" y="101" width="31" height="636" fill="#00a000"/><rect x="178" y="101" width="1" height="636" fill="#40ff40"/><path d="M222 737 V101 H274 V737 Z" fill="#00a000"/><path d="M222 101 H274 V737 H271 L228 694 Q222 688 222 679 Z" fill="#c2e2c2"/><rect x="222" y="101" width="1" height="584" fill="#d8f0d8"/><path d="M274,101 L468,101 L468,344 L482,344 L482,737 L274,737 Z" fill="#00a000"/><rect x="467" y="101" width="1" height="243" fill="#40ff40"/><rect x="274" y="101" width="14" height="116" fill="#000"/><rect x="274" y="269" width="128" height="14" fill="#000"/><rect x="274" y="335" width="146" height="14" fill="#000"/><path d="M395 271.3 A39 39 0 0 1 395 346.7 Z" fill="#000"/><rect x="350" y="341" width="70" height="70" rx="10" fill="#000"/><path d="M398,269 L412,269 L424,283 L410,283 Z" fill="#000"/><rect x="274" y="349" width="14" height="101" fill="#000"/><rect x="274" y="502" width="128" height="14" fill="#000"/><rect x="274" y="568" width="146" height="14" fill="#000"/><path d="M395 504.3 A39 39 0 0 1 395 579.7 Z" fill="#000"/><rect x="350" y="574" width="70" height="70" rx="10" fill="#000"/><path d="M398,502 L412,502 L424,516 L410,516 Z" fill="#000"/><rect x="274" y="582" width="14" height="101" fill="#000"/><rect x="274" y="735" width="128" height="14" fill="#000"/><rect x="274" y="801" width="146" height="14" fill="#000"/><path d="M395 737.3 A39 39 0 0 1 395 812.7 Z" fill="#000"/><rect x="350" y="807" width="70" height="70" rx="10" fill="#000"/><path d="M398,735 L412,735 L424,749 L410,749 Z" fill="#000"/><rect x="274" y="101" width="14" height="116" fill="#000"/><path d="M420,355 L469,306 L477,306 L477,346 L420,403 Z" fill="#000"/><path d="M482 344 V737" stroke="none"/><path d="M420,528 L427,543 L483,489 L483,737 L420,737 Z" fill="#000"/><path d="M455,593 L487,562 L488,562 L488,737 L455,737 Z" fill="#00a000"/><path d="M498.5,101 L498.5,496 L412,582 L400,594" fill="none" stroke="#00a000" stroke-width="5" stroke-linejoin="round"/><path d="M512.5,101 L512.5,514 L438.5,588 L438.5,737" fill="none" stroke="#00a000" stroke-width="5" stroke-linejoin="round"/><rect x="481" y="101" width="5" height="215" fill="#00a000"/><path d="M274,568 L287,568 L274,581 Z" fill="#00a000"/><path d="M401,596 L427,570" fill="none" stroke="#48e848" stroke-width="5" stroke-linejoin="round"/><path d="M400,377 L422,377 L483.5,315.5" fill="none" stroke="#48e848" stroke-width="5" stroke-linejoin="round"/><rect x="468" y="101" width="9" height="256" fill="#484848"/><path d="M467,356 L477,346 L477,497 L467,497 Z" fill="#48e848"/><rect x="468" y="497" width="9" height="68" fill="#484848"/><rect x="467" y="565" width="10" height="124" fill="#48e848"/><rect x="467" y="680" width="21" height="9" fill="#48e848"/><rect x="488" y="681" width="609" height="9" fill="#484848"/><path d="M477 490 V346 Q479.5 342 482 346 V490 Z" fill="#00a000"/><rect x="488" y="101" width="1" height="636" fill="#40ff40"/><path d="M505 101 V350 Q505 356 511 356 H649 V101 H639 V347 H515 V101 Z" fill="#484848"/><rect x="510" y="101" width="5" height="255" fill="#48e848"/><rect x="496" y="101" width="5" height="395" fill="#00a000"/><rect x="510" y="356" width="5" height="158" fill="#00a000"/><circle cx="544" cy="614" r="66" fill="#484848"/><path d="M488 578 A66 66 0 0 0 488 650 Z" fill="#48e848"/><circle cx="544" cy="614" r="52.5" fill="none" stroke="#c2c200" stroke-width="1"/><circle cx="544" cy="614" r="42.5" fill="#000" stroke="#848400" stroke-width="6"/><path d="M499 569 L589 659 M589 569 L499 659" stroke="#0000c0" stroke-width="1"/><circle cx="544" cy="118" r="26.5" fill="none" stroke="#c2c200" stroke-width="1"/><circle cx="544" cy="118" r="16" fill="none" stroke="#848400" stroke-width="10"/><path d="M526.5 100.5 L561.5 135.5 M561.5 100.5 L526.5 135.5" stroke="#0000d0" stroke-width="1"/><text x="544.5" y="123.5" font-size="15.5" fill="#fff" text-anchor="middle" font-family="Liberation Sans" letter-spacing="0.8">42</text><circle cx="610" cy="118" r="26.5" fill="none" stroke="#c2c200" stroke-width="1"/><circle cx="610" cy="118" r="16" fill="none" stroke="#848400" stroke-width="10"/><path d="M592.5 100.5 L627.5 135.5 M627.5 100.5 L592.5 135.5" stroke="#0000d0" stroke-width="1"/><text x="610.5" y="123.5" font-size="15.5" fill="#fff" text-anchor="middle" font-family="Liberation Sans" letter-spacing="0.8">41</text><circle cx="544" cy="184.5" r="26.5" fill="none" stroke="#c2c200" stroke-width="1"/><circle cx="544" cy="184.5" r="16" fill="none" stroke="#848400" stroke-width="10"/><path d="M526.5 167.0 L561.5 202.0 M561.5 167.0 L526.5 202.0" stroke="#0000d0" stroke-width="1"/><text x="544.5" y="190.0" font-size="15.5" fill="#fff" text-anchor="middle" font-family="Liberation Sans" letter-spacing="0.8">44</text><circle cx="610" cy="184.5" r="26.5" fill="none" stroke="#c2c200" stroke-width="1"/><circle cx="610" cy="184.5" r="16" fill="none" stroke="#848400" stroke-width="10"/><path d="M592.5 167.0 L627.5 202.0 M627.5 167.0 L592.5 202.0" stroke="#0000d0" stroke-width="1"/><text x="610.5" y="190.0" font-size="15.5" fill="#fff" text-anchor="middle" font-family="Liberation Sans" letter-spacing="0.8">43</text><circle cx="544" cy="251" r="26.5" fill="none" stroke="#c2c200" stroke-width="1"/><circle cx="544" cy="251" r="16" fill="none" stroke="#848400" stroke-width="10"/><path d="M526.5 233.5 L561.5 268.5 M561.5 233.5 L526.5 268.5" stroke="#0000d0" stroke-width="1"/><text x="544.5" y="256.5" font-size="15.5" fill="#fff" text-anchor="middle" font-family="Liberation Sans" letter-spacing="0.8">46</text><circle cx="610" cy="251" r="26.5" fill="none" stroke="#c2c200" stroke-width="1"/><circle cx="610" cy="251" r="16" fill="none" stroke="#848400" stroke-width="10"/><path d="M592.5 233.5 L627.5 268.5 M627.5 233.5 L592.5 268.5" stroke="#0000d0" stroke-width="1"/><text x="610.5" y="256.5" font-size="15.5" fill="#fff" text-anchor="middle" font-family="Liberation Sans" letter-spacing="0.8">45</text><circle cx="544" cy="317" r="26.5" fill="none" stroke="#c2c200" stroke-width="1"/><circle cx="544" cy="317" r="16" fill="none" stroke="#848400" stroke-width="10"/><path d="M526.5 299.5 L561.5 334.5 M561.5 299.5 L526.5 334.5" stroke="#0000d0" stroke-width="1"/><text x="544.5" y="322.5" font-size="15.5" fill="#fff" text-anchor="middle" font-family="Liberation Sans" letter-spacing="0.8">48</text><circle cx="610" cy="317" r="26.5" fill="none" stroke="#c2c200" stroke-width="1"/><circle cx="610" cy="317" r="16" fill="none" stroke="#848400" stroke-width="10"/><path d="M592.5 299.5 L627.5 334.5 M627.5 299.5 L592.5 334.5" stroke="#0000d0" stroke-width="1"/><text x="610.5" y="322.5" font-size="15.5" fill="#fff" text-anchor="middle" font-family="Liberation Sans" letter-spacing="0.8">47</text><path d="M352 209 V407 H418 V209 Z" fill="none" stroke="#48e848" stroke-width="4"/><rect x="350" y="269" width="4" height="14" fill="#484848"/><rect x="416" y="283" width="4" height="120" fill="#484848"/><rect x="350" y="335" width="4" height="68" fill="#484848"/><rect x="350" y="341" width="70" height="4" fill="#484848"/><path d="M352 398 Q352 409 363 409 H407 Q418 409 418 398" fill="none" stroke="#48e848" stroke-width="4"/><circle cx="385" cy="309" r="27" fill="none" stroke="#c2c200" stroke-width="1"/><circle cx="385" cy="309" r="16" fill="#000" stroke="#848400" stroke-width="8"/><text x="385" y="302" font-size="16" fill="#fff" text-anchor="middle" font-family="Liberation Sans">2</text><text x="385" y="325" font-size="16" fill="#fff" text-anchor="middle" font-family="Liberation Sans" letter-spacing="-0.5">+5P</text><rect x="358.5" y="349.5" width="54" height="54" fill="none" stroke="#c2c200" stroke-width="1"/><rect x="365" y="356" width="41" height="41" fill="#848400"/><circle cx="386" cy="377" r="13.5" fill="#000"/><text transform="translate(381 377) rotate(-90)" x="0" y="0" font-size="15" fill="#fff" text-anchor="middle" font-family="Liberation Sans">1</text><text transform="translate(399 377) rotate(-90)" x="0" y="0" font-size="15" fill="#fff" text-anchor="middle" font-family="Liberation Sans">L3A</text><path d="M369 213 Q386 204 402 213 L398 219 Q386 214 373 219 Z" fill="#000"/><path d="M406 223 Q425 243 408 263 L404 259 Q416 243 402 227 Z" fill="#000"/><rect x="274" y="217" width="26" height="52" fill="#c2c2c2"/><rect x="293" y="217" width="119" height="52" rx="26" fill="#c2ffc2"/><rect x="293" y="268" width="50" height="1" fill="#40ff40"/><circle cx="386" cy="243" r="27" fill="none" stroke="#f0f0a0" stroke-width="1"/><path d="M400 220 A26.5 26.5 0 0 1 400 266" fill="none" stroke="#e8e800" stroke-width="1.2"/><circle cx="386" cy="243" r="17.5" fill="none" stroke="#ffffc8" stroke-width="8"/><circle cx="386" cy="243" r="13.5" fill="#80ff80"/><text x="386" y="237" font-size="13" fill="#fff" text-anchor="middle" font-family="Liberation Sans">3</text><text x="386" y="256" font-size="8.5" fill="#fff" text-anchor="middle" font-family="Liberation Sans" letter-spacing="0.3">GNDPWR</text><text x="319" y="248" font-size="7.5" fill="#fff" text-anchor="middle" font-family="Liberation Sans" letter-spacing="0.4">GNDPWR</text><text x="319" y="263" font-size="13" fill="#fff" text-anchor="middle" font-family="Liberation Sans">2</text><path d="M352 442 V640 H418 V442 Z" fill="none" stroke="#48e848" stroke-width="4"/><rect x="350" y="502" width="4" height="14" fill="#484848"/><rect x="416" y="516" width="4" height="120" fill="#484848"/><rect x="350" y="568" width="4" height="68" fill="#484848"/><rect x="350" y="574" width="70" height="4" fill="#484848"/><path d="M352 631 Q352 642 363 642 H407 Q418 642 418 631" fill="none" stroke="#48e848" stroke-width="4"/><circle cx="385" cy="542" r="27" fill="none" stroke="#c2c200" stroke-width="1"/><circle cx="385" cy="542" r="16" fill="#000" stroke="#848400" stroke-width="8"/><text x="385" y="535" font-size="16" fill="#fff" text-anchor="middle" font-family="Liberation Sans">2</text><text x="385" y="558" font-size="16" fill="#fff" text-anchor="middle" font-family="Liberation Sans" letter-spacing="-0.5">+5P</text><rect x="358.5" y="582.5" width="54" height="54" fill="none" stroke="#c2c200" stroke-width="1"/><rect x="365" y="589" width="41" height="41" fill="#848400"/><circle cx="386" cy="610" r="13.5" fill="#000"/><text transform="translate(381 610) rotate(-90)" x="0" y="0" font-size="15" fill="#fff" text-anchor="middle" font-family="Liberation Sans">1</text><text transform="translate(399 610) rotate(-90)" x="0" y="0" font-size="15" fill="#fff" text-anchor="middle" font-family="Liberation Sans">L3B</text><path d="M369 446 Q386 437 402 446 L398 452 Q386 447 373 452 Z" fill="#000"/><path d="M406 456 Q425 476 408 496 L404 492 Q416 476 402 460 Z" fill="#000"/><rect x="274" y="450" width="26" height="52" fill="#c2c2c2"/><rect x="287" y="450" width="125" height="52" rx="26" fill="#c2ffc2"/><rect x="293" y="501" width="50" height="1" fill="#40ff40"/><circle cx="386" cy="476" r="27" fill="none" stroke="#f0f0a0" stroke-width="1"/><path d="M400 453 A26.5 26.5 0 0 1 400 499" fill="none" stroke="#e8e800" stroke-width="1.2"/><circle cx="386" cy="476" r="17.5" fill="none" stroke="#ffffc8" stroke-width="8"/><circle cx="386" cy="476" r="13.5" fill="#80ff80"/><rect x="379" y="470" width="24" height="13" rx="6" fill="#c2c2c2"/><rect x="398" y="470" width="8" height="13" fill="#c8c89a"/><rect x="406" y="470" width="6" height="13" fill="#98c898"/><path d="M373 463.5 H412 M373 488.5 H412" stroke="#a0b0a0" stroke-width="1"/><text x="386" y="470" font-size="13" fill="#fff" text-anchor="middle" font-family="Liberation Sans">3</text><text x="386" y="489" font-size="8.5" fill="#fff" text-anchor="middle" font-family="Liberation Sans" letter-spacing="0.3">GNDPWR</text><text x="319" y="481" font-size="7.5" fill="#fff" text-anchor="middle" font-family="Liberation Sans" letter-spacing="0.4">GNDPWR</text><text x="319" y="496" font-size="13" fill="#fff" text-anchor="middle" font-family="Liberation Sans">2</text><path d="M352 675 V873 H418 V675 Z" fill="none" stroke="#48e848" stroke-width="4"/><rect x="350" y="735" width="4" height="14" fill="#484848"/><rect x="416" y="749" width="4" height="120" fill="#484848"/><rect x="350" y="801" width="4" height="68" fill="#484848"/><rect x="350" y="807" width="70" height="4" fill="#484848"/><path d="M352 864 Q352 875 363 875 H407 Q418 875 418 864" fill="none" stroke="#48e848" stroke-width="4"/><circle cx="385" cy="775" r="27" fill="none" stroke="#c2c200" stroke-width="1"/><circle cx="385" cy="775" r="16" fill="#000" stroke="#848400" stroke-width="8"/><text x="385" y="768" font-size="16" fill="#fff" text-anchor="middle" font-family="Liberation Sans">2</text><text x="385" y="791" font-size="16" fill="#fff" text-anchor="middle" font-family="Liberation Sans" letter-spacing="-0.5">+5P</text><rect x="358.5" y="815.5" width="54" height="54" fill="none" stroke="#c2c200" stroke-width="1"/><rect x="365" y="822" width="41" height="41" fill="#848400"/><circle cx="386" cy="843" r="13.5" fill="#000"/><text transform="translate(381 843) rotate(-90)" x="0" y="0" font-size="15" fill="#fff" text-anchor="middle" font-family="Liberation Sans">1</text><text transform="translate(399 843) rotate(-90)" x="0" y="0" font-size="15" fill="#fff" text-anchor="middle" font-family="Liberation Sans">L3B</text><path d="M369 679 Q386 670 402 679 L398 685 Q386 680 373 685 Z" fill="#000"/><path d="M406 689 Q425 709 408 729 L404 725 Q416 709 402 693 Z" fill="#000"/><rect x="274" y="683" width="26" height="52" fill="#c2c2c2"/><rect x="287" y="683" width="125" height="52" rx="26" fill="#c2ffc2"/><rect x="293" y="734" width="50" height="1" fill="#40ff40"/><circle cx="386" cy="709" r="27" fill="none" stroke="#f0f0a0" stroke-width="1"/><path d="M400 686 A26.5 26.5 0 0 1 400 732" fill="none" stroke="#e8e800" stroke-width="1.2"/><circle cx="386" cy="709" r="17.5" fill="none" stroke="#ffffc8" stroke-width="8"/><circle cx="386" cy="709" r="13.5" fill="#80ff80"/><text x="386" y="703" font-size="13" fill="#fff" text-anchor="middle" font-family="Liberation Sans">3</text><text x="386" y="722" font-size="8.5" fill="#fff" text-anchor="middle" font-family="Liberation Sans" letter-spacing="0.3">GNDPWR</text><text x="319" y="714" font-size="7.5" fill="#fff" text-anchor="middle" font-family="Liberation Sans" letter-spacing="0.4">GNDPWR</text><text x="319" y="729" font-size="13" fill="#fff" text-anchor="middle" font-family="Liberation Sans">2</text><path d="M274,669 L288,683 L274,683 Z" fill="#c2c2c2"/><path d="M288 217 H299 Q292 222 292 229 H288 Z" fill="#c2e2c2"/><path d="M288 450 H299 Q292 455 292 462 H288 Z" fill="#c2e2c2"/><path d="M288 683 H299 Q292 688 292 695 H288 Z" fill="#c2e2c2"/><path d="M298.5 288 V316 H338.5 V288" fill="none" stroke="#48e848" stroke-width="2.5"/><circle cx="299" cy="320" r="3.3" fill="none" stroke="#48e848" stroke-width="2"/><text transform="translate(341 323) rotate(-90)" font-size="40" fill="#c8dcc8" font-family="Liberation Sans" textLength="44" lengthAdjust="spacingAndGlyphs">K7</text><text x="319" y="299" font-size="12" fill="#fff" text-anchor="middle" font-family="Liberation Sans">+5P</text><text x="318" y="312" font-size="12" fill="#fff" text-anchor="middle" font-family="Liberation Sans">1</text><path d="M307 273 Q316 266 325 273 M306 279 V291" fill="none" stroke="#0000e0" stroke-width="3" stroke-dasharray="4 3"/><path d="M298.5 521 V549 H338.5 V521" fill="none" stroke="#48e848" stroke-width="2.5"/><circle cx="299" cy="553" r="3.3" fill="none" stroke="#48e848" stroke-width="2"/><text transform="translate(341 556) rotate(-90)" font-size="40" fill="#c8dcc8" font-family="Liberation Sans" textLength="44" lengthAdjust="spacingAndGlyphs">K8</text><text x="319" y="532" font-size="12" fill="#fff" text-anchor="middle" font-family="Liberation Sans">+5P</text><text x="318" y="545" font-size="12" fill="#fff" text-anchor="middle" font-family="Liberation Sans">1</text><path d="M307 506 Q316 499 325 506 M306 512 V524" fill="none" stroke="#0000e0" stroke-width="3" stroke-dasharray="4 3"/><rect x="412" y="463" width="95" height="26" fill="none" stroke="#484848" stroke-width="1"/><rect x="412" y="470" width="95" height="12" fill="#484848" opacity="0.9"/><rect x="412" y="470" width="70" height="12" fill="#48e848"/><rect x="420" y="463" width="62" height="1" fill="#48e848"/><rect x="420" y="488" width="62" height="1" fill="#48e848"/><circle cx="507" cy="476" r="11" fill="none" stroke="#484848" stroke-width="1"/><path d="M505 476 L572 411" stroke="#484848" stroke-width="13"/><path d="M495 463 L563 396 M514 489 L585 421" stroke="#484848" stroke-width="1"/><path d="M592 396.5 H768 A13 13 0 0 1 768 422.5 H592" fill="none" stroke="#00a000" stroke-width="1"/><rect x="592" y="403" width="176" height="13" fill="#00a000"/><circle cx="768" cy="409" r="18" fill="none" stroke="#00a000" stroke-width="1"/><circle cx="768" cy="409" r="13" fill="none" stroke="#00a000" stroke-width="1"/><circle cx="592" cy="409" r="17.5" fill="none" stroke="#d8d8d8" stroke-width="1"/><circle cx="592" cy="409" r="13" fill="#c2c2c2" stroke="#00a000" stroke-width="1"/><rect x="584" y="404" width="4" height="11" fill="#7a7a7a"/><rect x="587" y="402" width="17" height="14" rx="5" fill="#c860c8"/><text x="650" y="415" font-size="16" fill="#f070f0" font-family="Liberation Sans" textLength="61" lengthAdjust="spacingAndGlyphs">GNDPWR</text><text transform="translate(504 323.5) rotate(-90)" font-size="32" fill="#c8c8c8" text-anchor="middle" font-family="Liberation Sans" letter-spacing="0">48</text><text transform="translate(677 319) rotate(-90)" font-size="32" fill="#c8c8c8" text-anchor="middle" font-family="Liberation Sans" letter-spacing="0">47</text><path d="M386 243 L768 409" stroke="#d8d800" stroke-width="1"/><path d="M386 243 L768 409" stroke="#e06010" stroke-width="1" stroke-dasharray="3 13"/><path d="M386 243 L412 254.3" stroke="#6010c0" stroke-width="1"/><path d="M319 251 L768 409" stroke="#d8d800" stroke-width="1"/><path d="M319 251 L768 409" stroke="#e06010" stroke-width="1" stroke-dasharray="2 17"/><path d="M319 251 L406 281.6" stroke="#2020d0" stroke-width="1"/><path d="M249 465 L768 409" stroke="#d8d800" stroke-width="1"/><path d="M400 448.7 L480 440" stroke="#e06010" stroke-width="1"/><path d="M249 465 L400 448.7" stroke="#2020d0" stroke-width="1"/><path d="M385 309.5 H1097" stroke="#f0f0f0" stroke-width="1"/><path d="M385.5 476 V709" stroke="#c8c8c8" stroke-width="1"/><path d="M768.5 396 V421 M757 409.5 H780" stroke="#f0f0f0" stroke-width="1"/><path d="M769 410 L769 426 L772.5 422.5 L775.5 429 L777.5 428 L774.5 421.5 L779.5 421.5 Z" fill="#fff" stroke="#000" stroke-width="0.8"/><rect x="261" y="735" width="215" height="3" fill="#ee7a4a"/></g></svg>
</body></html>
